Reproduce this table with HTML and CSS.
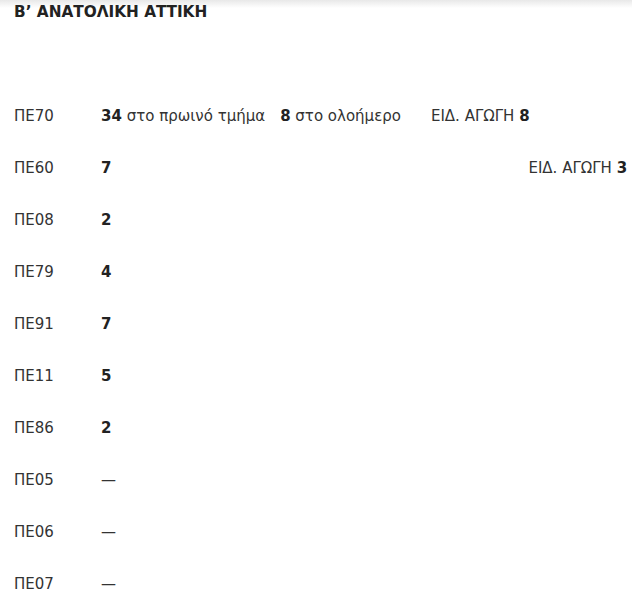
FILE: index.html
```html
<!DOCTYPE html>
<html lang="el">
<head>
    <meta charset="UTF-8">
    <meta name="viewport" content="width=device-width, initial-scale=1.0">
    <title>Β΄ Ανατολική Αττική</title>
    <link rel="stylesheet" href="styles.css">
</head>
<body>
    <div class="top-shade"></div>
    <h2 class="area-title">Β’ ΑΝΑΤΟΛΙΚΗ ΑΤΤΙΚΗ</h2>
    <div class="spec-list">
        <div class="spec-row">
            <span class="spec">ΠΕ70</span>
            <span class="cell cell-main"><b>34</b> στο πρωινό τμήμα</span>
            <span class="cell cell-full"><b>8</b> στο ολοήμερο</span>
            <span class="cell cell-special">ΕΙΔ. ΑΓΩΓΗ <b>8</b></span>
        </div>
        <div class="spec-row">
            <span class="spec">ΠΕ60</span>
            <span class="cell"><b>7</b></span>
            <span class="cell cell-far">ΕΙΔ. ΑΓΩΓΗ <b>3</b></span>
        </div>
        <div class="spec-row">
            <span class="spec">ΠΕ08</span>
            <span class="cell"><b>2</b></span>
        </div>
        <div class="spec-row">
            <span class="spec">ΠΕ79</span>
            <span class="cell"><b>4</b></span>
        </div>
        <div class="spec-row">
            <span class="spec">ΠΕ91</span>
            <span class="cell"><b>7</b></span>
        </div>
        <div class="spec-row">
            <span class="spec">ΠΕ11</span>
            <span class="cell"><b>5</b></span>
        </div>
        <div class="spec-row">
            <span class="spec">ΠΕ86</span>
            <span class="cell"><b>2</b></span>
        </div>
        <div class="spec-row">
            <span class="spec">ΠΕ05</span>
            <span class="cell">—</span>
        </div>
        <div class="spec-row">
            <span class="spec">ΠΕ06</span>
            <span class="cell">—</span>
        </div>
        <div class="spec-row">
            <span class="spec">ΠΕ07</span>
            <span class="cell">—</span>
        </div>
    </div>
</body>
</html>
```
FILE: styles.css
```css
body {
    font-family: "DejaVu Sans", Verdana, sans-serif;
    margin: 0;
    padding: 0;
    color: #333;
    background: #fff;
    overflow: hidden;
}
.top-shade {
    height: 8px;
    background: linear-gradient(#e8e8e8, #fff);
}
.area-title {
    margin: -7px 0 0 14px;
    font-size: 15.3px;
    line-height: 22px;
    color: #222;
}
.spec-list {
    display: flex;
    flex-direction: column;
    gap: 38px;
    margin-top: 86px;
}
.spec-row {
    display: flex;
    line-height: 14px;
    font-size: 15px;
    white-space: nowrap;
}
.spec {
    width: 87px;
    padding-left: 14px;
    flex-shrink: 0;
}
.cell b {
    color: #222;
}
.cell-full {
    margin-left: 15px;
}
.cell-special {
    margin-left: 30px;
}
.cell-far {
    margin-left: 417px;
}
```
